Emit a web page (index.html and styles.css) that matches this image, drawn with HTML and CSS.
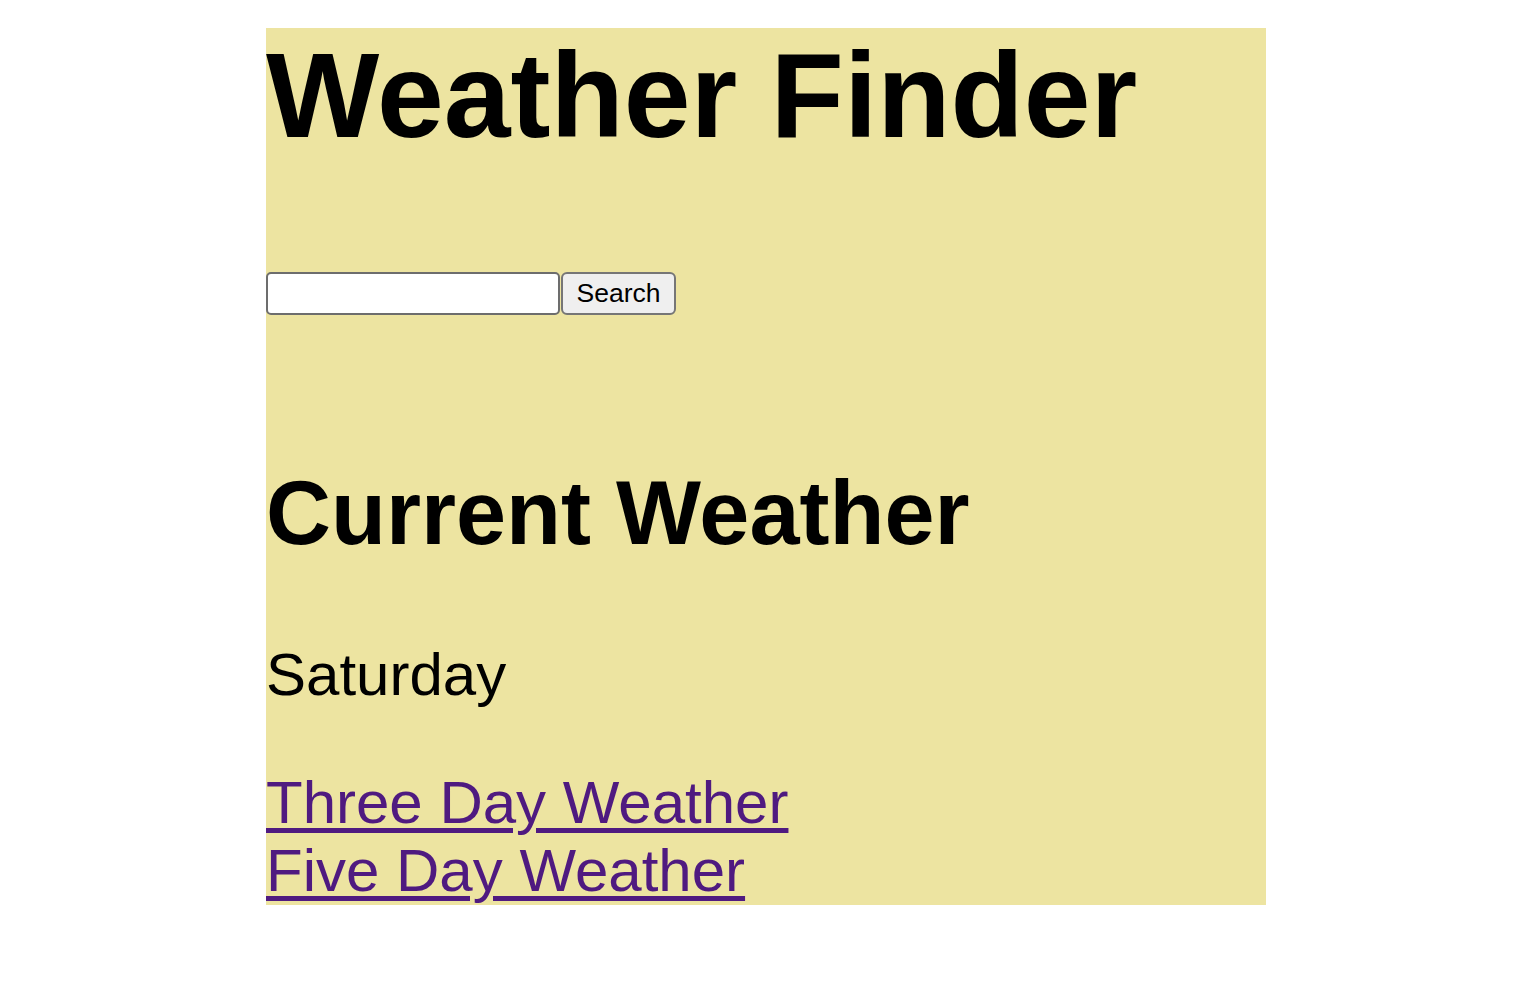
FILE: index.html
```html
<!DOCTYPE html>
<html lang="en">
<head>
<meta charset="utf-8">
<title>Weather Finder</title>
<link rel="stylesheet" href="styles.css">
</head>
<body>
<main class="page">
  <h1 class="title">Weather Finder</h1>
  <form class="search">
    <input class="search-input" type="text" aria-label="City">
    <button class="search-button" type="button">Search</button>
  </form>
  <h2 class="section-title">Current Weather</h2>
  <p class="day">Saturday</p>
  <nav class="links">
    <a class="link" href="#three">Three Day Weather</a>
    <a class="link" href="#five">Five Day Weather</a>
  </nav>
</main>
</body>
</html>
```
FILE: styles.css
```css
html, body {
  margin: 0;
  padding: 0;
  background: #ffffff;
}

body {
  padding: 28px 0 0 12px;
  font-family: "Liberation Sans", Arial, Helvetica, sans-serif;
  color: #000000;
}

.page {
  width: 1000px;
  margin: 0 auto;
  background: #ede4a1;
  font-size: 60px;
  line-height: 69px;
}

.title {
  margin: 0 0 80px;
  font-size: 120px;
  line-height: 134px;
  font-weight: bold;
}

.search {
  display: flex;
  align-items: flex-start;
  gap: 1px;
  margin: 0;
  padding: 30px 0 72px;
}

.search-input {
  box-sizing: border-box;
  width: 294px;
  height: 43px;
  margin: 0;
  padding: 2px 4px;
  border: 2px solid #6d6d6d;
  border-radius: 5px;
  background: #ffffff;
  font-family: "Liberation Sans", Arial, sans-serif;
  font-size: 26px;
}

.search-button {
  box-sizing: border-box;
  width: 115px;
  height: 43px;
  margin: 0;
  padding: 0 12px;
  border: 2px solid #767676;
  border-radius: 6px;
  background: #efefef;
  color: #000000;
  font-family: "Liberation Sans", Arial, sans-serif;
  font-size: 26.5px;
  line-height: 1;
}

.section-title {
  margin: 75px 0;
  font-size: 90px;
  line-height: 103px;
  font-weight: bold;
}

.day {
  margin: 0 0 60px;
  font-size: 60px;
  line-height: 69px;
}

.links {
  display: flex;
  flex-direction: column;
  align-items: flex-start;
  line-height: 68px;
}

.link {
  color: #4f1a80;
  text-decoration: underline;
  text-decoration-thickness: 5px;
  text-underline-offset: 5px;
}
```
